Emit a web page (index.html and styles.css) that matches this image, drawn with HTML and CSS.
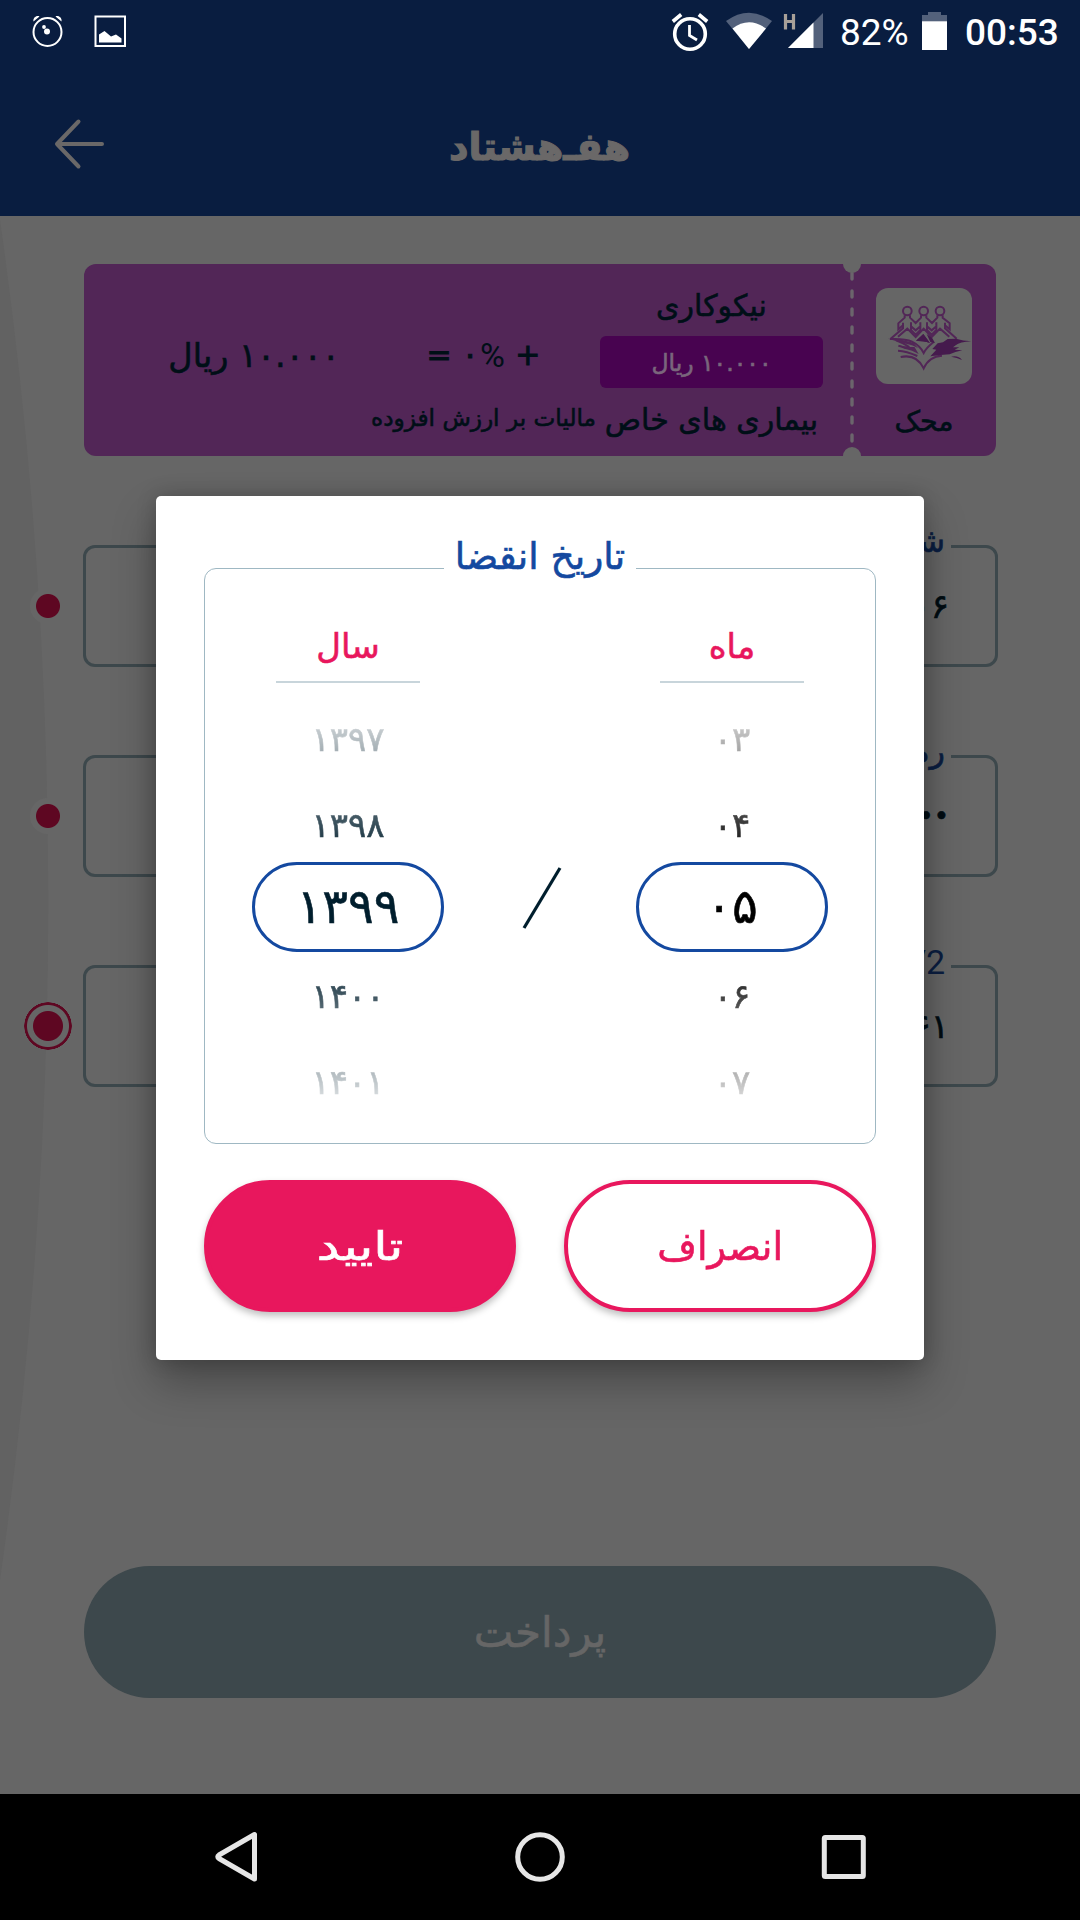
FILE: index.html
```html
<!DOCTYPE html>
<html lang="fa">
<head>
<meta charset="utf-8">
<title>هف‌هشتاد</title>
<link rel="stylesheet" href="styles.css">
</head>
<body>
<div class="screen">
  <header class="top">
    <div class="status">
      <svg class="status-left" width="110" height="60" viewBox="28 0 110 60">
        <g fill="none" stroke="#fff" stroke-width="2"><circle cx="47.5" cy="32" r="14"/><rect x="95.5" y="16.5" width="29.5" height="29.5"/></g>
        <path fill="#fff" d="M33.500 21.500c-.8-3.500 3-6.500 6-5zM61.500 21.500c.8-3.500-3-6.500-6-5zM99 42.500v-8l5.500-3.500 6.500 5.500 5-2 5.500 4v4z"/>
        <circle cx="47" cy="31.500" r="3" fill="#fff"/><circle cx="44" cy="27" r="1.900" fill="#fff"/>
      </svg>
      <div class="status-right">
        <svg width="154" height="60" viewBox="670 0 154 60">
          <circle cx="690" cy="34" r="15.300" fill="none" stroke="#fff" stroke-width="3.600"/>
          <path d="M689.500 25v10.500l7.500 4.500" fill="none" stroke="#fff" stroke-width="2.800"/>
          <path d="M672.800 21.500l8.400-7M707.200 21.500l-8.400-7" stroke="#fff" stroke-width="3.600"/>
          <path fill="#53617b" d="M726 21q23-16.500 46 0l-23 28z"/>
          <path fill="#fff" d="M732.500 28.500q16.500-12.500 33.500 0L749 49z"/>
          <path fill="#53617b" d="M823 13v35h-35z"/><path fill="#fff" d="M813.500 22.500V48H788z"/>
          <path d="M785.500 14v15.500M793.500 14v15.500M785.500 21.500h8" stroke="#a8a098" stroke-width="3.200"/>
        </svg>
        <span class="percent">82%</span>
        <svg class="battery" width="25" height="60" viewBox="922 0 25 60">
          <path fill="#53617b" d="M922 15h6v-3h13v3h6v7h-25z"/><path fill="#fff" d="M922 21.300h25V50h-25z"/>
        </svg>
        <span class="time">00:53</span>
      </div>
    </div>
    <div class="appbar">
      <svg class="back" width="52" height="52" viewBox="0 0 52 52"><path d="M25.500 3.500L4 26l21.500 22.500M4 26h45" fill="none" stroke="#6a6868" stroke-width="4" stroke-linecap="round" stroke-linejoin="round"/></svg>
      <span class="fit logo" dir="rtl">هفـ‌هشتاد</span>
    </div>
  </header>

  <main class="content">
    <svg class="arc" width="60" height="1578" viewBox="0 216 60 1578"><path d="M0 220A4840 4840 0 0 1 0 1580z" fill="#626262"/></svg>
    <section class="ticket">
      <div class="ticket-body">
        <div class="total"><span class="fit total-text" dir="rtl">۱۰.۰۰۰ ریال</span></div>
        <div class="tax">
          <div class="tax-sum"><span>=</span><span class="rate"><span>۰</span><span>%</span></span><span>+</span></div>
          <span class="fit tax-label" dir="rtl">مالیات بر ارزش افزوده</span>
        </div>
        <div class="gift">
          <span class="fit gift-title" dir="rtl">نیکوکاری</span>
          <div class="chip"><span class="fit chip-text" dir="rtl">۱۰.۰۰۰ ریال</span></div>
          <span class="fit gift-cause" dir="rtl">بیماری های خاص</span>
        </div>
      </div>
      <div class="stub">
        <svg class="perforation" width="18" height="192" viewBox="0 0 18 192">
          <path d="M9 9V183" stroke="#6b656c" stroke-width="3.400" stroke-linecap="round" stroke-dasharray="6 12"/>
          <circle cx="9" cy="0" r="9" fill="#666"/><circle cx="9" cy="192" r="9" fill="#666"/>
        </svg>
        <div class="charity">
          <svg width="96" height="96" viewBox="0 0 288 288">
            <g fill="none" stroke="#522657" stroke-width="6">
              <circle cx="94" cy="69" r="13"/><circle cx="143" cy="69" r="13"/><circle cx="192" cy="69" r="13"/>
              <path d="M86 82v7L67 106v18l14-12v-8M102 82v7l17 16 16-16v-7M151 82v7l17 16 16-16v-7M200 82v7l21 17v18l-14-12v-8"/>
              <path d="M81 112v9L44 152M105 103v12l14 12 14-12v-12M153 103v12l14 12 14-12v-12M207 112v9l35 31M105 115v11l14 14 14-14v-11M153 115v11l14 14 14-14v-11"/>
              <path d="M66 146l28-24 25 25 24-25 24 25 25-25 28 24"/>
            </g>
            <g fill="none" stroke="#522657" stroke-width="6" stroke-linejoin="miter">
              <path d="M42 153q45-2 66 8 24 12 35 34 8-16 30-33"/>
              <path d="M60 157q22 8 40 20M67 173q20 9 48 7M66 188q25 1 58 16M74 207q48-10 69 34 16-36 55-38"/>
            </g>
            <g fill="#522657">
              <path d="M36 152l30 1 46 11 14 16-18-8-30-8zM68 172l24 4 24 2 12 20-20-10-22-6zM120 158l22-20 20 27-20-6z"/>
              <path fill="#451a4d" d="M163 205l18-20-12-2 16-17 16-3 14-10 25-1q21 6 46 8-35 2-47 12l-8 6h19l-14 7 23 2q-22 5-38 12-27 1-58 6zM120 158l22-20 20 27-10-3zM152 138l17 13 8 14-14-3zM225 206q22-5 33 10-15-8-33-10z"/>
            </g>
          </svg>
        </div>
        <span class="fit charity-name" dir="rtl">محک</span>
      </div>
    </section>

    <section class="form">
      <div class="row"><i class="dot"></i><div class="field"><span class="legend" dir="rtl">شماره کارت</span><span class="value">۶۰۳۷۰۶</span></div></div>
      <div class="row"><i class="dot"></i><div class="field"><span class="legend" dir="rtl">رمز دوم</span><span class="value bullets">••••••</span></div></div>
      <div class="row"><i class="dot current"></i><div class="field"><span class="legend latin">CVV2</span><span class="value">۶۱</span></div></div>
    </section>

    <button class="pay"><span class="fit pay-text" dir="rtl">پرداخت</span></button>
  </main>

  <nav class="nav">
    <svg width="1080" height="126" viewBox="0 1794 1080 126" fill="none" stroke="#e6e6e6" stroke-width="5">
      <path d="M254.500 1834.500v44.500l-35.500-20.500q-2.500-1.800 0-3.500z" stroke-linejoin="round"/>
      <circle cx="540" cy="1857" r="22.300"/>
      <rect x="824.300" y="1837.500" width="39" height="39" rx="1"/>
    </svg>
  </nav>

  <div class="dialog">
    <div class="picker">
      <div class="picker-title"><span class="fit title-text" dir="rtl">تاریخ انقضا</span></div>
      <div class="column year">
        <span class="head"><span class="fit year-head" dir="rtl">سال</span></span>
        <div class="wheel">
          <span class="before">۱۳۹۷</span><span class="before">۱۳۹۸</span><span class="sel">۱۳۹۹</span><span>۱۴۰۰</span><span>۱۴۰۱</span>
        </div>
      </div>
      <svg class="slash" width="42" height="66" viewBox="522 865 42 66"><path d="M525 928L561 868" stroke="#001e2d" stroke-width="3.200"/></svg>
      <div class="column month">
        <span class="head"><span class="fit month-head" dir="rtl">ماه</span></span>
        <div class="wheel">
          <span class="before">۰۳</span><span class="before">۰۴</span><span class="sel">۰۵</span><span>۰۶</span><span>۰۷</span>
        </div>
      </div>
    </div>
    <div class="actions">
      <button class="btn ok"><span class="fit ok-text" dir="rtl">تایید</span></button>
      <button class="btn cancel"><span class="fit cancel-text" dir="rtl">انصراف</span></button>
    </div>
  </div>
</div>
</body>
</html>
```
FILE: styles.css
```css
* { box-sizing: border-box; }
body { margin: 0; background: #666; font-family: "DejaVu Sans", "Noto Sans", sans-serif; }
.screen { position: relative; width: 1080px; height: 1920px; display: flex; flex-direction: column; overflow: hidden; }
.fit { display: inline-block; white-space: nowrap; }
.fit, .wheel, .value, .legend { -webkit-text-stroke: 0.6px currentColor; }
button { border: 0; padding: 0; font-family: inherit; }

.top { height: 216px; background: #091d40; }
.status { height: 72px; display: flex; justify-content: space-between; color: #fff; font-family: Roboto, sans-serif; font-size: 37px; line-height: 66px; }
.status-left { margin-left: 28px; }
.status-right { display: flex; padding-right: 21px; }
.percent { margin-left: 16px; width: 68px; }
.battery { margin: 0 18px 0 14px; }
.time { font-weight: 500; width: 94px; }
.appbar { height: 144px; display: grid; grid-template-columns: 1fr auto 1fr; align-items: center; padding: 0 54px 0 53px; }
.logo { font-size: 38px; font-weight: 700; color: #6a6868; grid-column: 2; padding-top: 6px; }
.fit.logo { -webkit-text-stroke: 1.2px currentColor; }

.content { position: relative; flex: 1; display: flex; flex-direction: column; padding-top: 48px; }
.arc { position: absolute; left: 0; top: 0; }
.ticket { display: flex; width: 912px; height: 192px; margin-left: 84px; background: #522657; border-radius: 12px; color: #000f17; }
.ticket-body { width: 768px; display: grid; grid-template-columns: 287px 225px 223px; column-gap: 0; }
.total { display: flex; justify-content: center; align-items: center; padding: 0 0 10px 53px; }
.total-text { font-size: 33.500px; }
.tax { display: flex; flex-direction: column; align-items: center; padding-top: 68px; }
.tax-sum { display: flex; align-items: center; justify-content: space-between; width: 114px; font-size: 30px; line-height: 46px; height: 46px; -webkit-text-stroke: 1px currentColor; }
.rate { display: flex; }
.rate span:last-child { font-family: Roboto, sans-serif; font-size: 34px; -webkit-text-stroke: 0; margin-left: 2px; }
.tax-label { font-size: 23.200px; margin-top: 26px; }
.gift { display: flex; flex-direction: column; align-items: center; width: 223px; margin-left: 4px; }
.gift-title { font-size: 30px; line-height: 84px; height: 72px; }
.chip { width: 223px; height: 52px; background: #480350; border-radius: 6px; color: #7a667c; display: flex; align-items: center; justify-content: center; padding-top: 2px; }
.chip-text { font-size: 23.500px; }
.gift-cause { font-size: 30px; line-height: 64px; }
.stub { position: relative; width: 144px; display: flex; flex-direction: column; align-items: center; padding-top: 24px; }
.perforation { position: absolute; left: -9px; top: 0; }
.charity { width: 96px; height: 96px; background: #666; border-radius: 12px; }
.charity-name { font-size: 28.500px; line-height: 76px; }

.form { display: flex; flex-direction: column; gap: 88px; margin-top: 89px; }
.row { position: relative; display: flex; align-items: center; height: 122px; padding-left: 24px; }
.dot { width: 48px; height: 48px; border-radius: 50%; background: radial-gradient(circle, #5e0722 0 11.500px, #666 12.500px 17.500px, transparent 18.500px); }
.dot.current { background: radial-gradient(circle, #5e0722 0 14.500px, #666 15.500px 20.500px, #5e0722 21.500px 23.500px, transparent 24px); }
.field { position: relative; display: flex; justify-content: flex-end; align-items: center; width: 915px; height: 122px; margin-left: 11px; border: 3px solid #3d484c; border-radius: 12px; padding-right: 46px; color: #000c12; font-size: 34px; }
.legend { position: absolute; right: 44px; top: -26px; padding: 0 6px; background: #666; color: #0b1e41; font-size: 32px; }
.legend.latin { font-family: Roboto, sans-serif; font-size: 34px; -webkit-text-stroke: 0; }
.bullets { font-size: 26px; }
.pay { width: 912px; height: 132px; margin: 479px 0 0 84px; border-radius: 66px; background: #3d484c; color: #666; }
.pay-text { font-size: 42px; }
.nav { height: 126px; background: #000; }

.dialog { position: absolute; left: 156px; top: 496px; width: 768px; height: 864px; padding: 72px 48px 0; background: #fff; border-radius: 5px; box-shadow: 0 22px 44px rgba(0,0,0,.3), 0 0 20px rgba(0,0,0,.2); }
.picker { position: relative; display: flex; justify-content: space-between; align-items: flex-start; height: 576px; border: 1px solid #9fb8c3; border-radius: 12px; padding: 0 47px; }
.picker-title { position: absolute; left: 239px; top: -37px; width: 192px; height: 48px; background: #fff; color: #1449a0; display: flex; align-items: center; justify-content: center; }
.title-text { font-size: 37.500px; }
.column { width: 192px; display: flex; flex-direction: column; align-items: center; padding-top: 42px; }
.head { width: 144px; height: 72px; display: flex; align-items: center; justify-content: center; border-bottom: 2px solid #c8d5db; color: #e8175d; font-size: 34px; }
.wheel { width: 192px; display: flex; flex-direction: column; font-size: 34px; text-align: center; color: #001e2d; margin-top: 7px; -webkit-mask-image: linear-gradient(transparent 0, #000 172px, #000 262px, transparent 434px); mask-image: linear-gradient(transparent 0, #000 172px, #000 262px, transparent 434px); }
.wheel > span { height: 86px; line-height: 89px; }
.wheel > .before { line-height: 98px; }
.month .wheel { color: #000; }
.wheel > .sel { height: 90px; line-height: 82px; border: 3px solid #1449a0; border-radius: 45px; font-size: 48px; }
.slash { margin: 296px 0 0 4px; }
.actions { display: flex; gap: 48px; margin-top: 36px; }
.btn { width: 312px; height: 132px; border-radius: 66px; border: 4px solid #e8175d; box-shadow: 0 4px 7px rgba(0,0,0,.25); background: #fff; color: #e8175d; font-size: 39px; }
.ok { background: #e8175d; color: #fff; }
.ok-text { transform: scaleX(1.320); }
.cancel-text { transform: scaleX(0.980); }
```
